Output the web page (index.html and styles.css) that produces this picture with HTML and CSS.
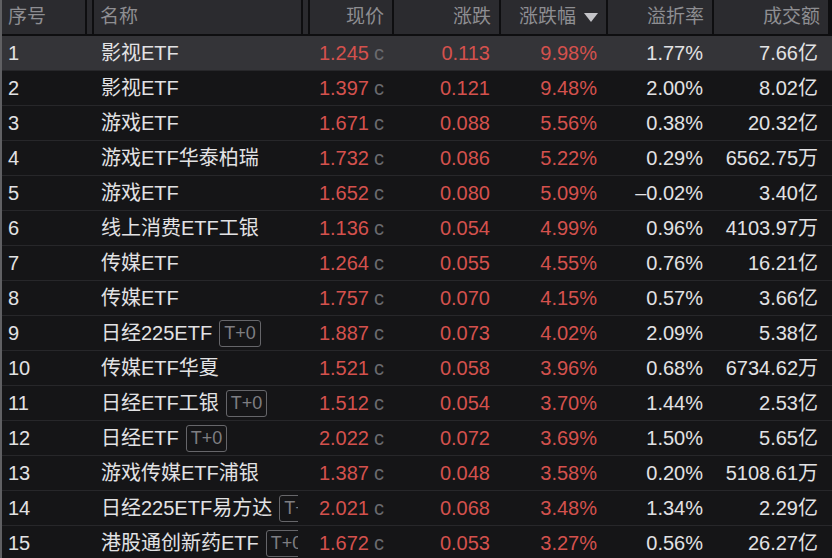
FILE: index.html
```html
<!DOCTYPE html>
<html lang="zh-CN">
<head>
<meta charset="utf-8">
<title>ETF 涨跌幅排行</title>
<link rel="stylesheet" href="styles.css">
</head>
<body>
<div class="table">
  <div class="head">
    <div class="h c-no">序号</div>
    <div class="h sp"></div>
    <div class="h c-name">名称</div>
    <div class="h sp"></div>
    <div class="h r">现价</div>
    <div class="h r">涨跌</div>
    <div class="h r">涨跌幅<span class="tri"></span></div>
    <div class="h r">溢折率</div>
    <div class="h r">成交额</div>
    <div class="h edge"></div>
  </div>

  <div class="row sel">
    <div class="c-no">1</div><div class="c-name"><div class="nm">影视ETF</div></div><div></div>
    <div class="r red">1.245<span class="cc">c</span></div><div class="r red">0.113</div><div class="r red">9.98%</div><div class="r">1.77%</div><div class="r">7.66亿</div>
  </div>
  <div class="row">
    <div class="c-no">2</div><div class="c-name"><div class="nm">影视ETF</div></div><div></div>
    <div class="r red">1.397<span class="cc">c</span></div><div class="r red">0.121</div><div class="r red">9.48%</div><div class="r">2.00%</div><div class="r">8.02亿</div>
  </div>
  <div class="row">
    <div class="c-no">3</div><div class="c-name"><div class="nm">游戏ETF</div></div><div></div>
    <div class="r red">1.671<span class="cc">c</span></div><div class="r red">0.088</div><div class="r red">5.56%</div><div class="r">0.38%</div><div class="r">20.32亿</div>
  </div>
  <div class="row">
    <div class="c-no">4</div><div class="c-name"><div class="nm">游戏ETF华泰柏瑞</div></div><div></div>
    <div class="r red">1.732<span class="cc">c</span></div><div class="r red">0.086</div><div class="r red">5.22%</div><div class="r">0.29%</div><div class="r">6562.75万</div>
  </div>
  <div class="row">
    <div class="c-no">5</div><div class="c-name"><div class="nm">游戏ETF</div></div><div></div>
    <div class="r red">1.652<span class="cc">c</span></div><div class="r red">0.080</div><div class="r red">5.09%</div><div class="r">–0.02%</div><div class="r">3.40亿</div>
  </div>
  <div class="row">
    <div class="c-no">6</div><div class="c-name"><div class="nm">线上消费ETF工银</div></div><div></div>
    <div class="r red">1.136<span class="cc">c</span></div><div class="r red">0.054</div><div class="r red">4.99%</div><div class="r">0.96%</div><div class="r">4103.97万</div>
  </div>
  <div class="row">
    <div class="c-no">7</div><div class="c-name"><div class="nm">传媒ETF</div></div><div></div>
    <div class="r red">1.264<span class="cc">c</span></div><div class="r red">0.055</div><div class="r red">4.55%</div><div class="r">0.76%</div><div class="r">16.21亿</div>
  </div>
  <div class="row">
    <div class="c-no">8</div><div class="c-name"><div class="nm">传媒ETF</div></div><div></div>
    <div class="r red">1.757<span class="cc">c</span></div><div class="r red">0.070</div><div class="r red">4.15%</div><div class="r">0.57%</div><div class="r">3.66亿</div>
  </div>
  <div class="row">
    <div class="c-no">9</div><div class="c-name"><div class="nm">日经225ETF<span class="tag">T+0</span></div></div><div></div>
    <div class="r red">1.887<span class="cc">c</span></div><div class="r red">0.073</div><div class="r red">4.02%</div><div class="r">2.09%</div><div class="r">5.38亿</div>
  </div>
  <div class="row">
    <div class="c-no">10</div><div class="c-name"><div class="nm">传媒ETF华夏</div></div><div></div>
    <div class="r red">1.521<span class="cc">c</span></div><div class="r red">0.058</div><div class="r red">3.96%</div><div class="r">0.68%</div><div class="r">6734.62万</div>
  </div>
  <div class="row">
    <div class="c-no">11</div><div class="c-name"><div class="nm">日经ETF工银<span class="tag">T+0</span></div></div><div></div>
    <div class="r red">1.512<span class="cc">c</span></div><div class="r red">0.054</div><div class="r red">3.70%</div><div class="r">1.44%</div><div class="r">2.53亿</div>
  </div>
  <div class="row">
    <div class="c-no">12</div><div class="c-name"><div class="nm">日经ETF<span class="tag">T+0</span></div></div><div></div>
    <div class="r red">2.022<span class="cc">c</span></div><div class="r red">0.072</div><div class="r red">3.69%</div><div class="r">1.50%</div><div class="r">5.65亿</div>
  </div>
  <div class="row">
    <div class="c-no">13</div><div class="c-name"><div class="nm">游戏传媒ETF浦银</div></div><div></div>
    <div class="r red">1.387<span class="cc">c</span></div><div class="r red">0.048</div><div class="r red">3.58%</div><div class="r">0.20%</div><div class="r">5108.61万</div>
  </div>
  <div class="row">
    <div class="c-no">14</div><div class="c-name"><div class="nm">日经225ETF易方达<span class="tag">T+0</span></div></div><div></div>
    <div class="r red">2.021<span class="cc">c</span></div><div class="r red">0.068</div><div class="r red">3.48%</div><div class="r">1.34%</div><div class="r">2.29亿</div>
  </div>
  <div class="row">
    <div class="c-no">15</div><div class="c-name"><div class="nm">港股通创新药ETF<span class="tag">T+0</span></div></div><div></div>
    <div class="r red">1.672<span class="cc">c</span></div><div class="r red">0.053</div><div class="r red">3.27%</div><div class="r">0.56%</div><div class="r">26.27亿</div>
  </div>
</div>
</body>
</html>
```

FILE: styles.css
```css
* { box-sizing: border-box; }
html, body {
  margin: 0;
  padding: 0;
  width: 832px;
  height: 558px;
  overflow: hidden;
  background: #151517;
}
.table {
  width: 832px;
  border-left: 2px solid #606063;
  font-family: "Liberation Sans", "Noto Sans CJK SC", sans-serif;
  font-size: 20px;
  color: #e2e2e4;
}
.head, .row {
  display: grid;
  grid-template-columns: 85px 7px 209px 7px 84px 107px 107px 106px 116px 2px;
}
.head {
  height: 36px;
  background: #2b2b2f;
  border-bottom: 2px solid #0e0e10;
  color: #8e8e92;
  font-size: 19px;
}
.h {
  display: flex;
  align-items: center;
  border-right: 2px solid #0e0e10;
  line-height: 34px;
  white-space: nowrap;
}
.h.r { justify-content: flex-end; padding-right: 8px; }
.h.c-no { padding-left: 6px; }
.h.c-name { padding-left: 6px; }
.h.edge { border-right: 0; background: #0e0e10; }
.tri {
  display: inline-block;
  width: 0;
  height: 0;
  margin-left: 8px;
  border-left: 7px solid transparent;
  border-right: 7px solid transparent;
  border-top: 9px solid #c4c4c8;
}
.row {
  height: 35px;
  border-bottom: 1px solid #27272a;
  align-items: center;
  line-height: 34px;
  white-space: nowrap;
}
.row.sel { background: #343438; }
.row > div { height: 34px; }
.row .c-no { padding-left: 6px; grid-column: 1 / 3; }
.row .c-name { padding-left: 7px; grid-column: 3 / 4; }
.nm {
  width: 197px;
  overflow: hidden;
  display: flex;
  align-items: center;
}
.row .r {
  text-align: right;
  padding-right: 11px;
}
.row > div:nth-child(4) { padding-right: 10px; }
.row > div:nth-child(8) { padding-right: 12px; }
.red { color: #d4514d; }
.cc {
  color: #6a6a6e;
  font-size: 20px;
  margin-left: 5px;
}
.tag {
  display: inline-flex;
  align-items: center;
  justify-content: center;
  flex: none;
  margin-left: 7px;
  height: 27px;
  padding: 0 4px;
  border: 1.5px solid #66666a;
  border-radius: 3px;
  color: #7e7e82;
  font-size: 18px;
  line-height: 24px;
}
```
